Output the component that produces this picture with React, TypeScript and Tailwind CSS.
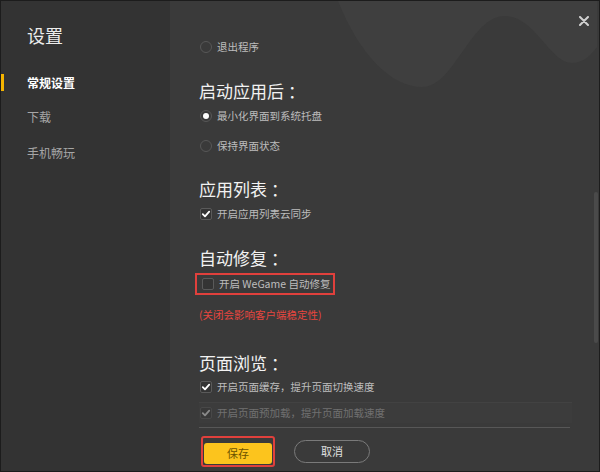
import React from "react";

const font = "font-['Noto_Sans_CJK_SC',sans-serif]";

const Radio = ({ checked, label }: { checked?: boolean; label: string }) => (
  <div className="flex items-center h-5 gap-[5px] pl-px">
    <span className="w-3 h-3 rounded-full border border-[#575757] flex items-center justify-center">
      {checked && <span className="w-[6px] h-[6px] rounded-full bg-white" />}
    </span>
    <span className="text-[10.5px] text-[#bdbdbd] leading-none">{label}</span>
  </div>
);

const Check = ({ checked, label, dim }: { checked?: boolean; label: string; dim?: boolean }) => (
  <div className={`flex items-center h-5 gap-[5px] pl-px ${dim ? "opacity-40" : ""}`}>
    <span className="w-3 h-3 rounded-[2px] border border-[#5a5a5a] bg-[#343434] flex items-center justify-center">
      {checked && (
        <svg width="10" height="10" viewBox="0 0 10 10">
          <path d="M1.8 5.2 L4 7.4 L8.2 2.6" fill="none" stroke="#fff" strokeWidth="1.8" strokeLinecap="round" strokeLinejoin="round" />
        </svg>
      )}
    </span>
    <span className="text-[10.5px] text-[#bdbdbd] leading-none">{label}</span>
  </div>
);

const Heading = ({ text, className = "" }: { text: string; className?: string }) => (
  <div className={`h-6 flex items-center text-[17px] text-[#f2f2f2] leading-none ${className}`}>
    {text}
    <span className="ml-[4px]">：</span>
  </div>
);

export default function App() {
  return (
    <div className={`w-[600px] h-[472px] bg-[#1c1c1c] p-px flex ${font}`}>
      {/* sidebar */}
      <div className="w-[169px] bg-[#333333] flex flex-col">
        <div className="pl-[26px] pt-[25px] h-[46px] text-[18px] text-[#ececec] leading-none">设置</div>
        <div className="mt-[27px] flex flex-col">
          <div className="relative h-[18px] flex items-center">
            <span className="absolute left-0 top-0 w-[3px] h-[17px] bg-[#f5b400]" />
            <span className="pl-[26px] text-[12px] font-bold text-white">常规设置</span>
          </div>
          <div className="mt-[16px] h-[18px] flex items-center pl-[26px] text-[12px] text-[#a6a6a6]">下载</div>
          <div className="mt-[18px] h-[18px] flex items-center pl-[26px] text-[12px] text-[#a6a6a6]">手机畅玩</div>
        </div>
      </div>

      {/* main */}
      <div className="relative flex-1 bg-[#3a3a3a] overflow-hidden flex flex-col">
        <svg className="absolute left-0 top-0" width="428" height="160" viewBox="170 0 428 160">
          <path
            d="M338,0 C360,55 392,86 422,86 C455,86 470,15 505,15 C535,15 550,62 572,62 C585,62 592,52 597,46 L597,0 Z"
            fill="#3f3f3f"
          />
        </svg>

        <svg className="absolute left-[409px] top-[15px]" width="10" height="10" viewBox="0 0 10 10">
          <path d="M1 1 L9 9 M9 1 L1 9" stroke="#d0d0d0" strokeWidth="2" strokeLinecap="round" />
        </svg>

        {/* scrollbar */}
        <div className="absolute right-[1px] top-[191px] w-[4px] h-[151px] rounded-full bg-[#4a4a4a]" />

        <div className="relative h-[426px] overflow-hidden pl-[29px] pr-[27px] pt-[36px]">
          <Radio label="退出程序" />
          <Heading className="mt-[21px]" text="启动应用后" />
          <div className="mt-[4px]">
            <Radio checked label="最小化界面到系统托盘" />
          </div>
          <div className="mt-[10px]">
            <Radio label="保持界面状态" />
          </div>
          <Heading className="mt-[20px]" text="应用列表" />
          <div className="mt-[4px]">
            <Check checked label="开启应用列表云同步" />
          </div>
          <Heading className="mt-[21px]" text="自动修复" />
          <div className="mt-[4px] flex">
            <div className="-ml-[4px] pl-[4px] pr-[3px] border-2 border-[#e0403c] h-[22px] flex items-center">
              <Check label="开启 WeGame 自动修复" />
            </div>
          </div>
          <div className="mt-[10px] h-5 flex items-center text-[10.5px] text-[#e8463f] leading-none">(关闭会影响客户端稳定性)</div>
          <Heading className="mt-[25px]" text="页面浏览" />
          <div className="mt-[3px]">
            <Check checked label="开启页面缓存，提升页面切换速度" />
          </div>
          <div className="mt-[5px] border-t border-[#424242] bg-[#3c3c3c]">
            <Check checked dim label="开启页面预加载，提升页面加载速度" />
          </div>
        </div>

        {/* footer */}
        <div className="mx-[29px] border-t border-[#575757]" />
        <div className="flex items-center pl-[31px] pt-[8px] gap-[19px]">
          <div className="border-2 border-[#e0403c] rounded-[3px] p-px">
            <button className="w-[68px] h-[21px] rounded-[3px] bg-[#fcc41d] text-[11px] text-[#6b5200] leading-none">保存</button>
          </div>
          <button className="w-[76px] h-[23px] rounded-full border-[1.5px] border-[#7a7a7a] text-[11px] text-[#e0e0e0] leading-none">取消</button>
        </div>
      </div>
    </div>
  );
}
